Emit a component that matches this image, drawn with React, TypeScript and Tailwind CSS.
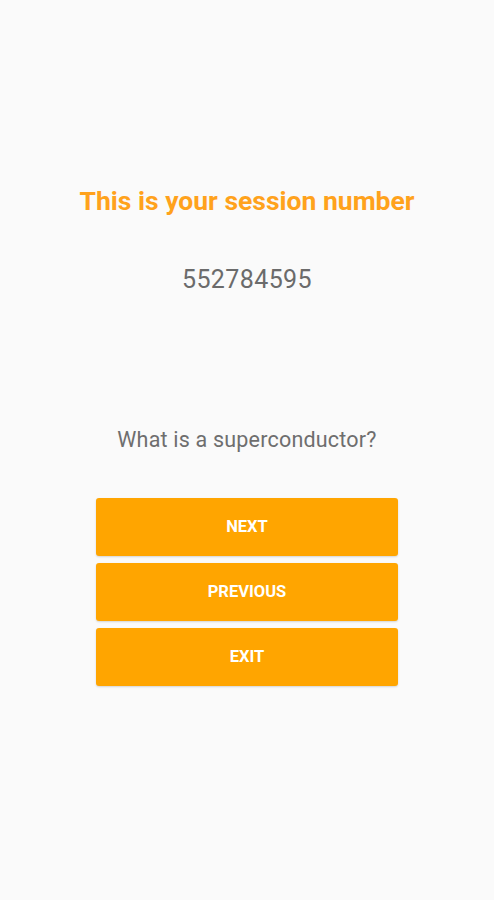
export default function App() {
  return (
    <div className="min-h-[900px] w-full bg-[#fafafa] flex flex-col items-center" style={{ fontFamily: "Roboto, 'Liberation Sans', sans-serif" }}>
      <h1 className="mt-[185px] text-[26.5px] leading-[32px] font-bold text-[#ffa21c] whitespace-nowrap">This is your session number</h1>
      <div className="mt-[47px] text-[25px] leading-[32px] text-[#6b6b6b] tracking-[0.4px]">552784595</div>
      <div className="mt-[130px] text-[21.5px] leading-[28px] text-[#6e6e6e] tracking-[0.2px]">What is a superconductor?</div>
      <div className="mt-[44px] w-[302px] flex flex-col gap-[7px]">
        {["NEXT", "PREVIOUS", "EXIT"].map((t) => (
          <button key={t} className="h-[58px] w-full rounded-[3px] bg-[#ffa500] text-white text-[16.5px] font-bold shadow-[0_1px_2px_rgba(0,0,0,0.15)]">
            {t}
          </button>
        ))}
      </div>
    </div>
  );
}
